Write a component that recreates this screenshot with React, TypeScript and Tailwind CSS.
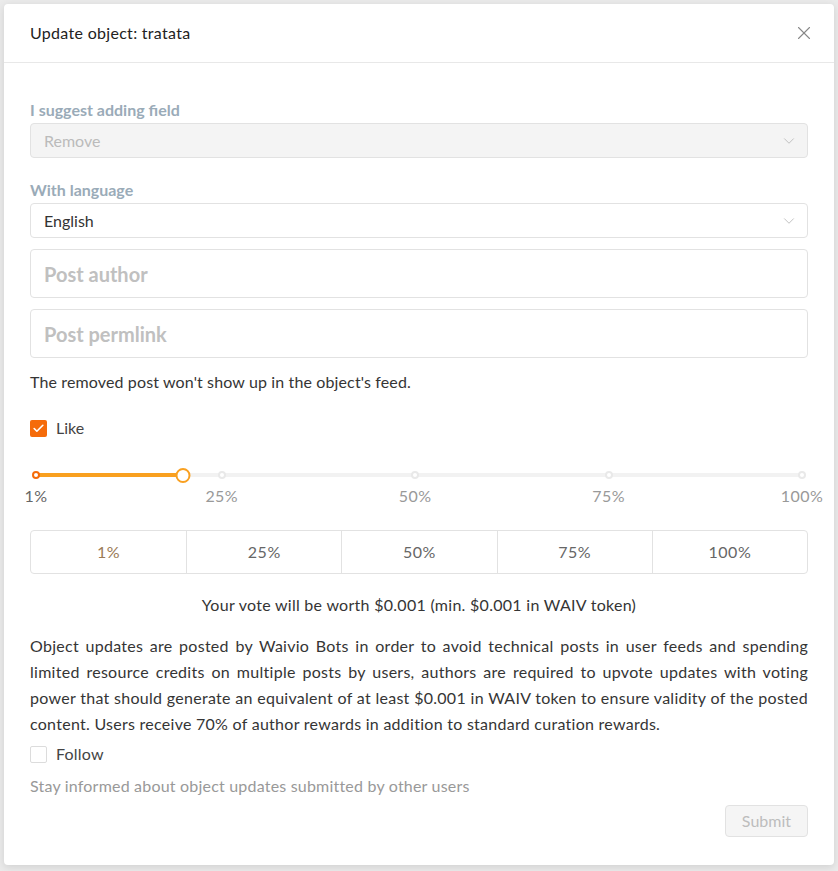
import { Check, ChevronDown, X } from 'lucide-react'

const marks = [1, 25, 50, 75, 100]
const value = 20

const pos = (v: number) => `${((v - 1) / 99) * 100}%`

function Slider() {
  return (
    <div className="mx-[6px] mt-[28px]">
      <div className="relative h-[14px]">
        <div className="absolute left-0 right-0 top-[5px] h-[4px] rounded-full bg-[#f2f2f2]" />
        <div
          className="absolute left-0 top-[5px] h-[4px] rounded-full bg-[#f9a020]"
          style={{ width: pos(value) }}
        />
        {marks.map((m) => (
          <span
            key={m}
            className={
              m <= value
                ? 'absolute top-[3px] h-[8px] w-[8px] -translate-x-1/2 rounded-full border-2 border-[#f56b0a] bg-white'
                : 'absolute top-[3px] h-[8px] w-[8px] -translate-x-1/2 rounded-full border-2 border-[#e9e9e9] bg-white'
            }
            style={{ left: pos(m) }}
          />
        ))}
        <span
          className="absolute top-0 h-[15px] w-[15px] -translate-x-1/2 rounded-full border-2 border-[#f9a020] bg-white"
          style={{ left: pos(value) }}
        />
      </div>
      <div className="relative mt-[2px] h-[22px]">
        {marks.map((m) => (
          <span
            key={m}
            className={
              m === 1
                ? 'absolute -translate-x-1/2 text-[16px] tracking-[0.4px] text-[#666]'
                : 'absolute -translate-x-1/2 text-[16px] tracking-[0.4px] text-[#999]'
            }
            style={{ left: pos(m) }}
          >
            {m}%
          </span>
        ))}
      </div>
    </div>
  )
}

export default function App() {
  return (
    <div
      className="min-h-[871px] bg-[#ebebeb] pt-[4px] pl-[4px]"
      style={{ fontFamily: 'Lato, "Noto Sans", sans-serif' }}
    >
      <div className="h-[861px] w-[830px] rounded-[4px] bg-white shadow-[0_2px_8px_rgba(0,0,0,0.12)]">
        <div className="flex h-[59px] items-center justify-between border-b border-[#e8e8e8] pl-[26px] pr-[19px]">
          <span className="text-[16px] tracking-[0.3px] text-[#222]">Update object: tratata</span>
          <X className="h-[22px] w-[22px] text-[#888]" strokeWidth={1.2} />
        </div>

        <div className="px-[26px] pt-[36px] text-[16px] text-[#333]">
          <div className="text-[16px] font-bold leading-[22px] text-[#9aabb8]">I suggest adding field</div>
          <div className="mt-[2px] flex h-[35px] items-center justify-between rounded-[4px] border border-[#e2e2e2] bg-[#f4f4f4] pl-[13px] pr-[9px]">
            <span className="text-[#bbb]">Remove</span>
            <ChevronDown className="h-[18px] w-[18px] text-[#bbb]" strokeWidth={1.2} />
          </div>

          <div className="mt-[21px] text-[16px] font-bold leading-[22px] text-[#9aabb8]">With language</div>
          <div className="mt-[2px] flex h-[35px] items-center justify-between rounded-[4px] border border-[#e2e2e2] bg-white pl-[13px] pr-[9px]">
            <span className="text-[#333]">English</span>
            <ChevronDown className="h-[18px] w-[18px] text-[#bbb]" strokeWidth={1.2} />
          </div>

          <div className="mt-[11px] flex h-[49px] items-center rounded-[4px] border border-[#e2e2e2] px-[13px] text-[20px] font-bold text-[#c0c0c0]">
            Post author
          </div>
          <div className="mt-[11px] flex h-[49px] items-center rounded-[4px] border border-[#e2e2e2] px-[13px] text-[20px] font-bold text-[#c0c0c0]">
            Post permlink
          </div>

          <p className="mt-[13px] leading-[22px] tracking-[0.13px] text-[#353535]">
            The removed post won't show up in the object's feed.
          </p>

          <label className="mt-[23px] flex items-center gap-[9px]">
            <span className="flex h-[17px] w-[17px] items-center justify-center rounded-[2px] bg-[#f56b0a]">
              <Check className="h-[13px] w-[13px] text-white" strokeWidth={3} />
            </span>
            <span className="text-[#444]">Like</span>
          </label>

          <Slider />

          <div className="mt-[24px] grid h-[44px] grid-cols-5 rounded-[4px] border border-[#e2e2e2] text-[16px] tracking-[0.5px] text-[#666]">
            <div className="flex items-center justify-center text-[#9a7a55]">1%</div>
            <div className="flex items-center justify-center border-l border-[#e2e2e2]">25%</div>
            <div className="flex items-center justify-center border-l border-[#e2e2e2]">50%</div>
            <div className="flex items-center justify-center border-l border-[#e2e2e2]">75%</div>
            <div className="flex items-center justify-center border-l border-[#e2e2e2]">100%</div>
          </div>

          <p className="mt-[20px] text-center leading-[22px] tracking-[0.28px] text-[#353535]">
            Your vote will be worth $0.001 (min. $0.001 in WAIV token)
          </p>

          <p className="mt-[17px] text-justify leading-[26px] tracking-[0.27px] text-[#353535]">
            Object updates are posted by Waivio Bots in order to avoid technical posts in user feeds and spending
            limited resource credits on multiple posts by users, authors are required to upvote updates with voting
            power that should generate an equivalent of at least $0.001 in WAIV token to ensure validity of the posted
            content. Users receive 70% of author rewards in addition to standard curation rewards.
          </p>

          <label className="mt-[5px] flex items-center gap-[9px]">
            <span className="h-[17px] w-[17px] rounded-[2px] border border-[#dcdcdc] bg-white" />
            <span className="tracking-[0.2px] text-[#444]">Follow</span>
          </label>

          <p className="mt-[9px] text-[16px] leading-[22px] tracking-[0.2px] text-[#999]">
            Stay informed about object updates submitted by other users
          </p>

          <div className="mt-[8px] flex justify-end">
            <button
              type="button"
              className="h-[32px] rounded-[4px] border border-[#e2e2e2] bg-[#f5f5f5] px-[16px] text-[16px] text-[#bdbdbd]"
            >
              Submit
            </button>
          </div>
        </div>
      </div>
    </div>
  )
}
